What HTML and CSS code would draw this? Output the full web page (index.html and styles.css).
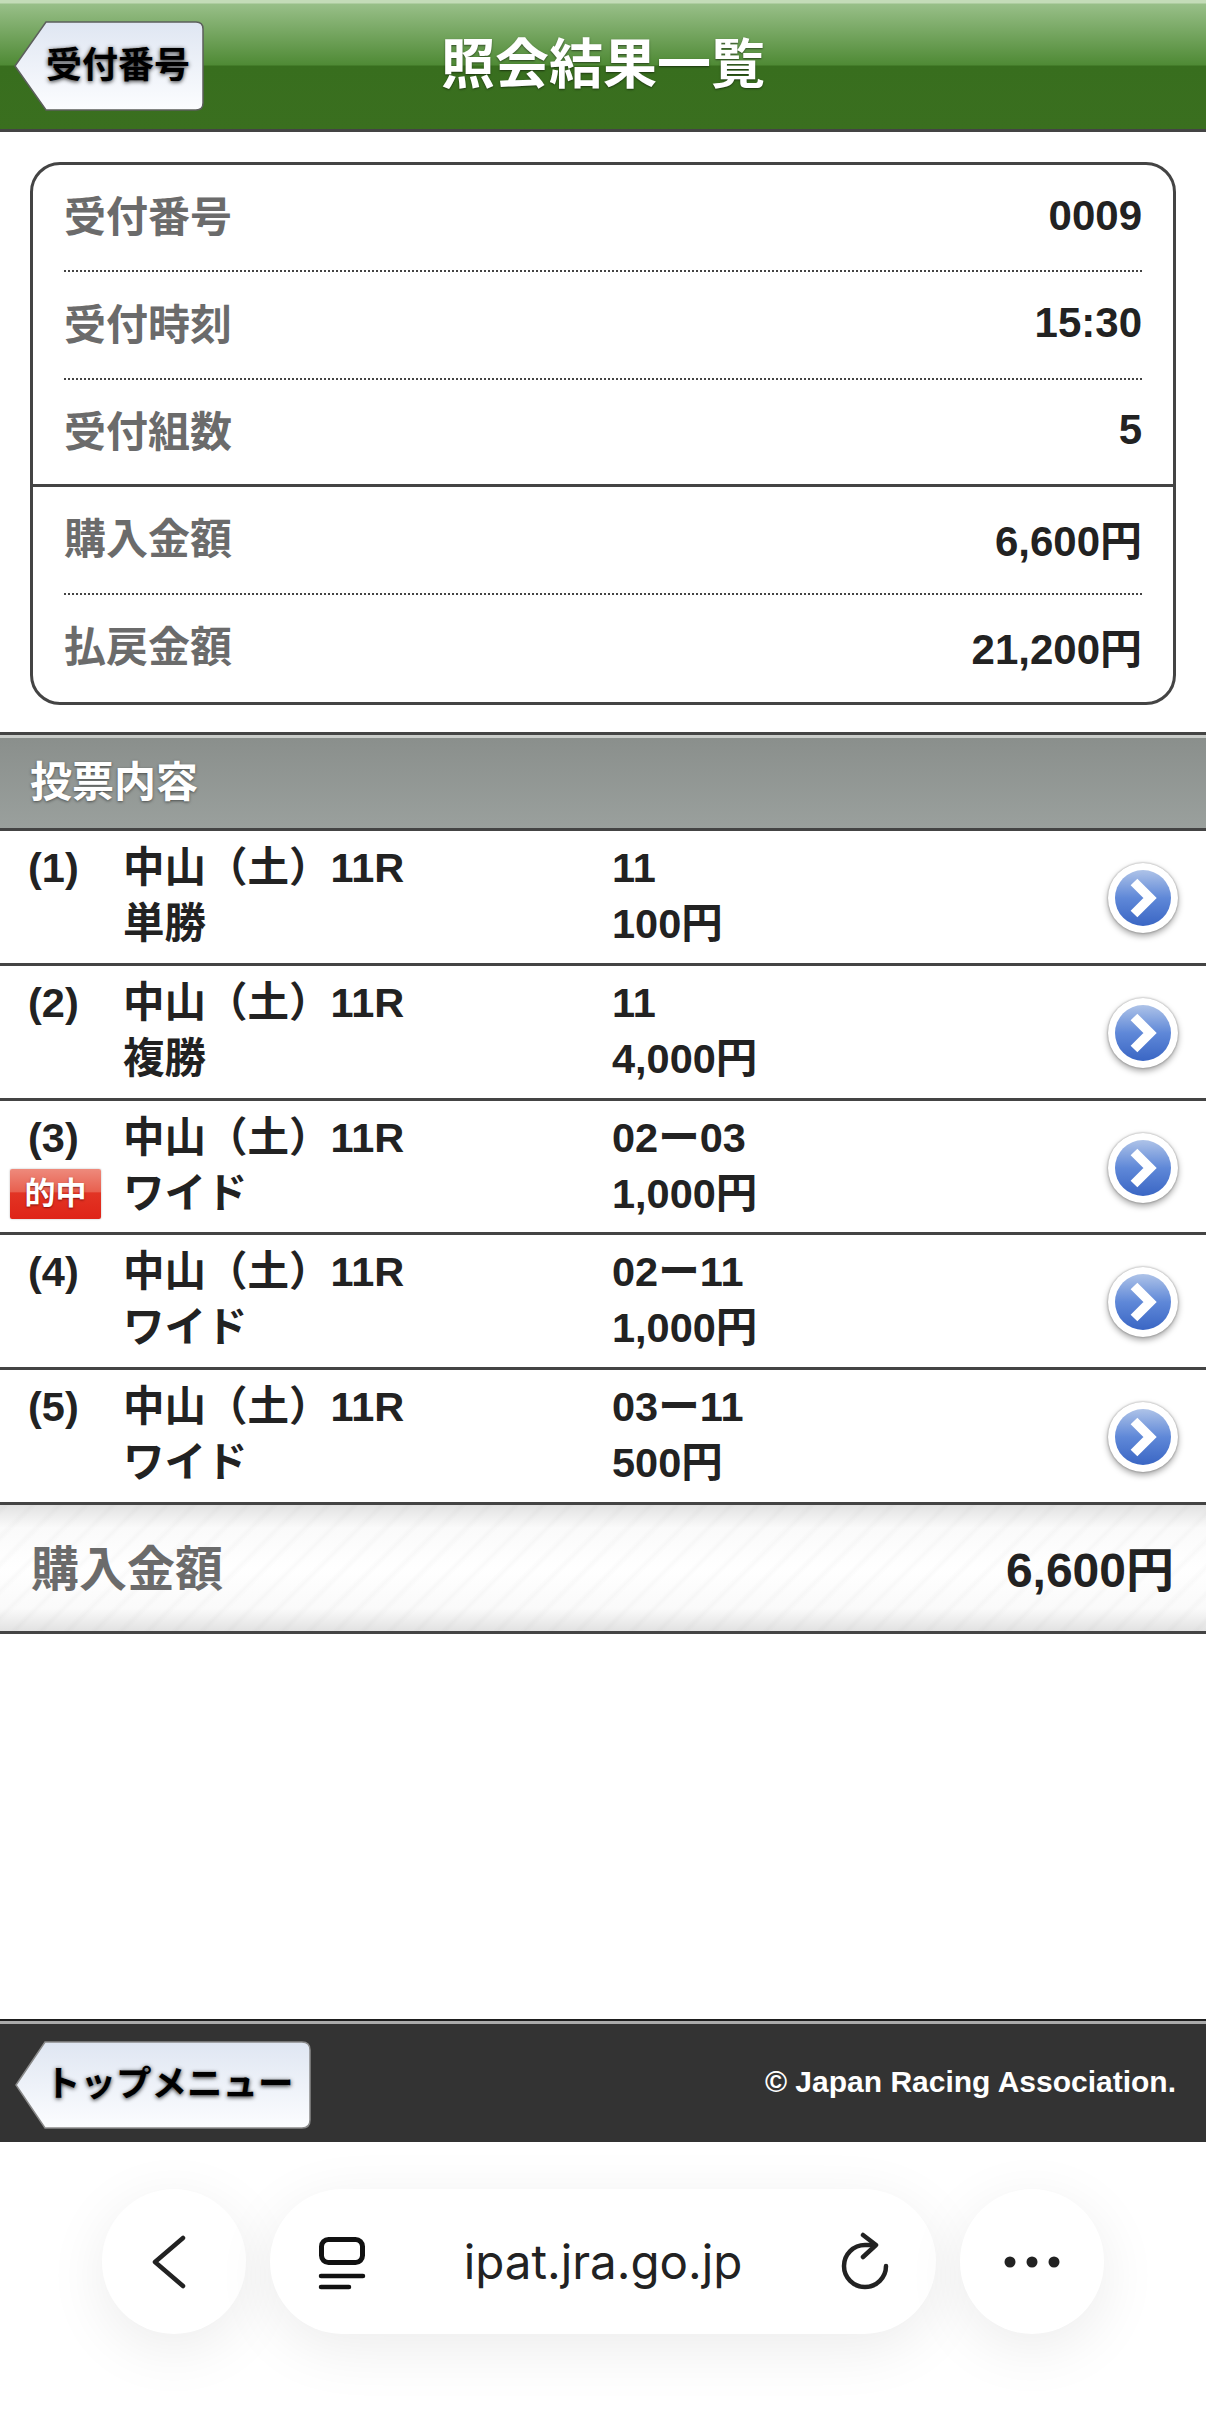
FILE: index.html
```html
<!DOCTYPE html>
<html lang="ja">
  <head>
    <meta charset="UTF-8" />
    <meta name="viewport" content="width=device-width, initial-scale=1.0" />
    <title>照会結果一覧</title>
    <link rel="stylesheet" href="styles.css">
  </head>
  <body>
    <svg class="defs" width="0" height="0">
      <defs>
        <linearGradient id="btnFill" x1="0" y1="0" x2="0" y2="1">
          <stop offset="0" stop-color="#dfe6f2" />
          <stop offset="1" stop-color="#fcfdff" />
        </linearGradient>
        <linearGradient id="arrowFill" x1="0" y1="0" x2="0" y2="1">
          <stop offset="0" stop-color="#aec3e8" />
          <stop offset="0.5" stop-color="#5f88d8" />
          <stop offset="1" stop-color="#3a66c4" />
        </linearGradient>
        <symbol id="arrow" viewBox="0 0 84 90">
          <circle cx="42" cy="42" r="35" fill="#fff" />
          <circle cx="42" cy="42" r="28" fill="url(#arrowFill)" />
          <path d="M33 26 L49 42 L33 58" fill="none" stroke="#fff" stroke-width="9.5" stroke-linejoin="miter" />
        </symbol>
      </defs>
    </svg>

    <header class="topbar">
      <a class="back-btn top-back">
        <svg class="btn-shape" viewBox="0 0 190 90" preserveAspectRatio="none">
          <path d="M1 45 L32 1 H182 Q189 1 189 8 V82 Q189 89 182 89 H32 Z" fill="url(#btnFill)" stroke="#5c5f5c" stroke-width="1.5" />
        </svg>
        <span class="btn-text">受付番号</span>
      </a>
      <h1>照会結果一覧</h1>
    </header>

    <section class="card">
      <div class="card-row dotted"><span class="label">受付番号</span><span class="value">0009</span></div>
      <div class="card-row dotted"><span class="label">受付時刻</span><span class="value">15:30</span></div>
      <div class="card-row solid"><span class="label">受付組数</span><span class="value">5</span></div>
      <div class="card-row dotted"><span class="label">購入金額</span><span class="value">6,600円</span></div>
      <div class="card-row"><span class="label">払戻金額</span><span class="value">21,200円</span></div>
    </section>

    <h2 class="section-head">投票内容</h2>

    <ul class="bets">
      <li class="bet">
        <div class="bet-no">(1)</div>
        <div class="bet-race">中山（土）11R<br>単勝</div>
        <div class="bet-num">11<br>100円</div>
        <svg class="bet-arrow"><use href="#arrow" /></svg>
      </li>
      <li class="bet">
        <div class="bet-no">(2)</div>
        <div class="bet-race">中山（土）11R<br>複勝</div>
        <div class="bet-num">11<br>4,000円</div>
        <svg class="bet-arrow"><use href="#arrow" /></svg>
      </li>
      <li class="bet">
        <div class="bet-no">(3)</div>
        <span class="hit">的中</span>
        <div class="bet-race">中山（土）11R<br>ワイド</div>
        <div class="bet-num">02ー03<br>1,000円</div>
        <svg class="bet-arrow"><use href="#arrow" /></svg>
      </li>
      <li class="bet">
        <div class="bet-no">(4)</div>
        <div class="bet-race">中山（土）11R<br>ワイド</div>
        <div class="bet-num">02ー11<br>1,000円</div>
        <svg class="bet-arrow"><use href="#arrow" /></svg>
      </li>
      <li class="bet">
        <div class="bet-no">(5)</div>
        <div class="bet-race">中山（土）11R<br>ワイド</div>
        <div class="bet-num">03ー11<br>500円</div>
        <svg class="bet-arrow"><use href="#arrow" /></svg>
      </li>
    </ul>

    <div class="total">
      <span class="total-label">購入金額</span>
      <span class="total-value">6,600円</span>
    </div>

    <div class="spacer"></div>

    <footer class="footer">
      <a class="back-btn foot-back">
        <svg class="btn-shape" viewBox="0 0 296 88" preserveAspectRatio="none">
          <path d="M1 44 L30 1 H287 Q295 1 295 9 V79 Q295 87 287 87 H30 Z" fill="url(#btnFill)" stroke="#8a8a8a" stroke-width="1.5" />
        </svg>
        <span class="btn-text">トップメニュー</span>
      </a>
      <span class="copy">© Japan Racing Association.</span>
    </footer>

    <nav class="browser">
      <div class="pill round">
        <svg class="icon" width="44" height="60" viewBox="0 0 44 60">
          <path d="M31 6 L3 30 L31 54" fill="none" stroke="#222" stroke-width="4.5" stroke-linecap="round" stroke-linejoin="round" />
        </svg>
      </div>
      <div class="pill url">
        <svg class="icon" width="52" height="56" viewBox="0 0 52 56">
          <rect x="5.5" y="5.5" width="41" height="23" rx="7" fill="none" stroke="#111" stroke-width="5" />
          <path d="M5 42 H47 M5 53 H33" fill="none" stroke="#111" stroke-width="4.5" stroke-linecap="round" />
        </svg>
        <span class="url-text">ipat.jra.go.jp</span>
        <svg class="icon" width="56" height="60" viewBox="0 0 56 60">
          <path d="M36 13 H27 A21 21 0 1 0 48 34" fill="none" stroke="#222" stroke-width="4.5" stroke-linecap="round" />
          <path d="M25 3 L38 13 L25 25" fill="none" stroke="#222" stroke-width="4.5" stroke-linecap="round" stroke-linejoin="round" />
        </svg>
      </div>
      <div class="pill round">
        <svg class="icon" width="60" height="14" viewBox="0 0 60 14">
          <circle cx="8" cy="7" r="5.5" fill="#222" />
          <circle cx="30" cy="7" r="5.5" fill="#222" />
          <circle cx="52" cy="7" r="5.5" fill="#222" />
        </svg>
      </div>
    </nav>
  </body>
</html>
```

FILE: styles.css
```css
html,
body {
  margin: 0;
  height: 2436px;
  overflow: hidden;
}
body {
  display: flex;
  flex-direction: column;
  background-color: #fff;
  font-family: "Liberation Sans", "Noto Sans CJK JP", sans-serif;
  font-weight: bold;
  color: #222;
}
.defs {
  position: absolute;
}
.topbar {
  position: relative;
  box-sizing: border-box;
  height: 132px;
  flex: none;
  display: flex;
  align-items: center;
  justify-content: center;
  border-bottom: 3px solid #444;
  background: linear-gradient(to bottom, #c4dcb8 0, #c4dcb8 3px, #98bf88 4px, #4f8a35 65px, #386e1e 66px, #3a6f1f 129px);
}
h1 {
  margin: 0;
  font-size: 54px;
  font-weight: bold;
  line-height: 1;
  color: #fff;
  text-shadow: 0 1px 2px rgba(0, 0, 0, 0.5);
}
.back-btn {
  position: absolute;
  display: flex;
  align-items: center;
  color: #000;
}
.top-back {
  left: 14px;
  top: 21px;
  width: 190px;
  height: 90px;
}
.foot-back {
  left: 15px;
  top: 20px;
  width: 296px;
  height: 88px;
}
.btn-shape {
  position: absolute;
  left: 0;
  top: 0;
  width: 100%;
  height: 100%;
}
.btn-text {
  position: relative;
  margin-left: 32px;
  font-size: 36px;
  line-height: 1;
  white-space: nowrap;
  text-shadow: 0 1px 4px rgba(0, 0, 0, 0.85);
}
.foot-back .btn-text {
  margin-left: 30px;
  font-size: 35.5px;
}

.card {
  box-sizing: border-box;
  height: 543px;
  flex: none;
  margin: 30px 30px 27px 30px;
  border: 3px solid #444;
  border-radius: 30px;
}
.card-row {
  box-sizing: border-box;
  height: 107.4px;
  display: flex;
  align-items: center;
  justify-content: space-between;
  padding: 0 31px;
  position: relative;
}
.card-row.dotted::after {
  content: "";
  position: absolute;
  left: 31px;
  right: 31px;
  bottom: 0;
  border-bottom: 2px dotted #444;
}
.card-row.solid {
  padding-top: 3px;
  border-bottom: 3px solid #444;
}
.label {
  margin-bottom: 10px;
  font-size: 42px;
  color: #6b6b6b;
}
.value {
  margin-bottom: 6px;
  font-size: 42px;
  color: #222;
}

.section-head {
  box-sizing: border-box;
  height: 99px;
  flex: none;
  margin: 0;
  padding: 0 0 6px 30px;
  display: flex;
  align-items: center;
  border-top: 3px solid #444;
  border-bottom: 3px solid #444;
  background: linear-gradient(to bottom, #c9ccc9 0, #c9ccc9 3px, #8a8f8c 3px, #9aa09d 100%);
  font-size: 42px;
  color: #fff;
  text-shadow: 0 1px 3px rgba(0, 0, 0, 0.5);
}

.bets {
  margin: 0;
  padding: 0;
  list-style: none;
  flex: none;
}
.bet {
  position: relative;
  box-sizing: border-box;
  height: 134.8px;
  padding-top: 9px;
  display: flex;
  border-bottom: 3px solid #444;
  font-size: 41.5px;
  line-height: 56px;
}
.bet:last-child {
  border-bottom: none;
  height: 132px;
}
.bet-no {
  width: 123px;
  padding-left: 28px;
  box-sizing: border-box;
  flex: none;
}
.bet-race {
  width: 489px;
  flex: none;
}
.bet-num {
  flex: 1;
}
.bet-arrow {
  position: absolute;
  right: 21px;
  top: 25px;
  width: 84px;
  height: 90px;
  filter: drop-shadow(0 0 1px rgba(0, 0, 0, 0.35)) drop-shadow(0 3px 3px rgba(0, 0, 0, 0.35));
}
.hit {
  position: absolute;
  left: 10px;
  top: 68px;
  width: 91px;
  height: 50px;
  display: flex;
  align-items: center;
  justify-content: center;
  border-radius: 2px;
  box-shadow: 0 0 2px rgba(0, 0, 0, 0.3);
  background: linear-gradient(to bottom, #ee8a7c 0, #e8604f 45%, #e23424 48%, #df2418 100%);
  font-size: 31px;
  line-height: 1;
  color: #fff;
  text-shadow: 0 1px 2px rgba(90, 0, 0, 0.7);
}

.total {
  box-sizing: border-box;
  height: 132px;
  flex: none;
  display: flex;
  align-items: center;
  justify-content: space-between;
  padding: 0 32px 6px 31px;
  border-top: 3px solid #444;
  border-bottom: 3px solid #444;
  background:
    repeating-linear-gradient(135deg, transparent 0, rgba(0, 0, 0, 0.018) 4px, transparent 8px, transparent 19px),
    linear-gradient(to bottom, #e2e2e2 0, #fafafa 18%, #fff 50%, #fafafa 82%, #e2e2e2 100%);
}
.total-label {
  font-size: 48px;
  color: #6b6b6b;
}
.total-value {
  margin-top: 1px;
  font-size: 48px;
  color: #222;
}

.spacer {
  flex: 1;
}

.footer {
  position: relative;
  box-sizing: border-box;
  height: 123px;
  flex: none;
  display: flex;
  align-items: center;
  justify-content: flex-end;
  padding-right: 30px;
  border-top: 2px solid #1e1e1e;
  background: linear-gradient(to bottom, #aaa 0, #aaa 3px, #333 3px);
}
.copy {
  font-size: 30px;
  color: #fff;
}

.browser {
  height: 294px;
  flex: none;
  box-sizing: border-box;
  padding: 47px 102px 0 102px;
  display: flex;
  gap: 24px;
  align-items: flex-start;
  background-color: #fff;
  font-family: Inter, "Liberation Sans", sans-serif;
  font-weight: normal;
}
.pill {
  height: 145px;
  display: flex;
  align-items: center;
  background-color: #fff;
  border-radius: 73px;
  box-shadow: 0 14px 60px rgba(0, 0, 0, 0.08);
}
.round {
  width: 144px;
  flex: none;
  justify-content: center;
}
.url {
  flex: 1;
  justify-content: space-between;
  padding: 0 42px 0 46px;
}
.url-text {
  font-size: 47.5px;
  color: #222;
}
```
